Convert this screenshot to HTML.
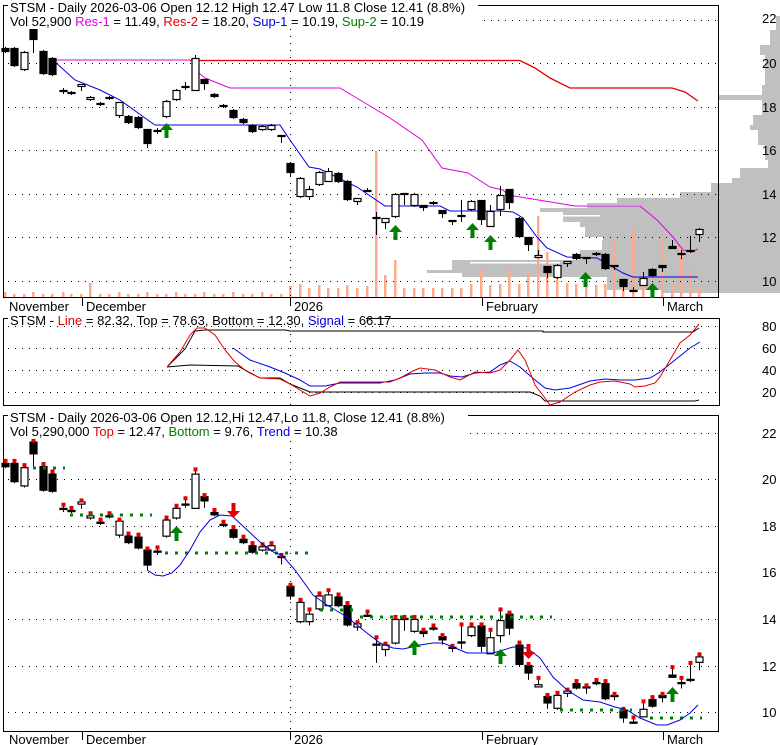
<!DOCTYPE html>
<html><head><meta charset="utf-8"><style>
body{margin:0;background:#fff;width:780px;height:745px;overflow:hidden}
svg{display:block}
text{font-family:"Liberation Sans",Arial,sans-serif;font-size:13px}
</style></head><body>
<svg id="s" width="780" height="745" xmlns="http://www.w3.org/2000/svg">
<g id="bg"></g>
<g id="g"></g>
<g id="t">
<rect x="8" y="0" width="470" height="29" fill="#fff"/>
<text x="10" y="12">STSM - Daily 2026-03-06 Open 12.12  High 12.47  Low 11.8  Close 12.41 (8.8%)</text>
<text x="10" y="26">Vol 52,900 <tspan fill="#e000e0">Res-1</tspan> = 11.49, <tspan fill="#e00000">Res-2</tspan> = 18.20, <tspan fill="#0000e0">Sup-1</tspan> = 10.19, <tspan fill="#008000">Sup-2</tspan> = 10.19</text>
<text x="9" y="311">November</text><text x="86" y="311">December</text><text x="294" y="311">2026</text><text x="486" y="311">February</text><text x="667" y="311">March</text>
<rect x="8" y="312" width="358" height="14" fill="#fff"/>
<text x="10" y="325">STSM - <tspan fill="#e00000">Line</tspan> = 82.32, Top = 78.63, Bottom = 12.30, <tspan fill="#0000e0">Signal</tspan> = 66.17</text>
<rect x="8" y="410" width="460" height="29" fill="#fff"/>
<text x="10" y="422">STSM - Daily 2026-03-06 Open 12.12,Hi 12.47,Lo 11.8, Close 12.41 (8.8%)</text>
<text x="10" y="436">Vol 5,290,000 <tspan fill="#e00000">Top</tspan> = 12.47, <tspan fill="#008000">Bottom</tspan> = 9.76, <tspan fill="#0000e0">Trend</tspan> = 10.38</text>
<text x="9" y="744">November</text><text x="86" y="744">December</text><text x="294" y="744">2026</text><text x="486" y="744">February</text><text x="667" y="744">March</text>
<g font-size="13">
<text x="762" y="23">22</text><text x="762" y="68">20</text><text x="762" y="112">18</text><text x="762" y="155">16</text><text x="762" y="199">14</text><text x="762" y="242">12</text><text x="762" y="286">10</text>
<text x="762" y="331">80</text><text x="762" y="353">60</text><text x="762" y="375">40</text><text x="762" y="397">20</text>
<text x="762" y="438">22</text><text x="762" y="484">20</text><text x="762" y="531">18</text><text x="762" y="577">16</text><text x="762" y="624">14</text><text x="762" y="671">12</text><text x="762" y="717">10</text>
</g>
</g>
</svg>
<script>
var NS="http://www.w3.org/2000/svg",G=document.getElementById('g'),BG=document.getElementById('bg');
function el(n,a,p){var e=document.createElementNS(NS,n);for(var k in a)e.setAttribute(k,a[k]);(p||G).appendChild(e);return e;}
function pl(pts,c,w,d){el('polyline',{points:pts.map(function(p){return p.join(',')}).join(' '),fill:'none',stroke:c,'stroke-width':w||1,'stroke-dasharray':d||''});}
function hd(y,x1,x2){el('line',{x1:x1||8,x2:x2||718,y1:y+.5,y2:y+.5,stroke:'#000','stroke-dasharray':'1,6'});}
var prof=[[16,776],[30,770],[45,760],[55,765],[85,762],[95,718],[100,762],[115,753],[125,750],[130,758],[145,765],[160,768],[168,740],[178,732],[183,711],[192,680],[198,617],[203,587],[208,540],[212,563],[222,580],[227,585],[237,603],[240,602],[250,580],[260,452],[264,452],[270,427],[273,462],[277,607],[290,663],[293,780]];
for(var i=0;i<prof.length-1;i++){el('rect',{x:prof[i][1],y:prof[i][0],width:780-prof[i][1],height:prof[i+1][0]-prof[i][0],fill:'#c0c0c0'},BG);}
[[205,560,640],[215,530,600],[250,440,560],[262,470,560]].forEach(function(a){el('rect',{x:a[1],y:a[0],width:a[2]-a[1],height:1.5,fill:'#fff'},BG);});
el('rect',{x:3.5,y:5.5,width:715,height:292,fill:'none',stroke:'#000'});
el('rect',{x:3.5,y:318.5,width:716,height:87,fill:'none',stroke:'#000'});
el('rect',{x:3.5,y:415.5,width:715,height:316,fill:'none',stroke:'#000'});
[20,63,107,150,194,237,281].forEach(function(y){hd(y)});
[326,348,370,392].forEach(function(y){hd(y)});
[433,479,526,572,619,666,712].forEach(function(y){hd(y)});
[[8,297],[320,405],[420,731]].forEach(function(r){el('line',{x1:290.5,x2:290.5,y1:r[0],y2:r[1],stroke:'#000','stroke-dasharray':'1,6'});});
[82,290,482,663].forEach(function(x){el('line',{x1:x+.5,x2:x+.5,y1:298,y2:306,stroke:'#000'});el('line',{x1:x+.5,x2:x+.5,y1:732,y2:740,stroke:'#000'});});
var C=[[5,48,52,1],[14,48,66,1],[24,52,70,0],[33,28,40,1,28,53],[43,51,74,1],[52,58,75,1],[63,90,92,1,88,94],[71,92,94,1],[81,84,87,0,84,91],[90,97,100,0],[100,103,105,1],[109,97,99,1],[119,102,116,0,102,118],[128,116,123,1],[138,117,128,1],[147,129,144,1,129,148],[157,130,132,1,128,134],[166,101,117,0],[176,90,100,0],[185,86,88,1,82,90],[195,58,91,0,55,91],[204,79,84,1,79,90],[214,94,97,1],[223,105,107,1],[233,110,118,1],[243,119,123,1],[252,125,132,1],[262,126,130,0],[271,125,130,0],[281,135,137,1,135,143],[290,163,173,1,163,176],[300,178,197,0],[309,189,197,0,186,200],[319,172,185,0],[328,171,182,0,168,182],[338,173,182,1],[347,181,200,1],[357,198,202,0,198,205],[367,190,192,1,188,192],[376,217,219,1,212,235],[385,218,223,0,218,229],[395,194,217,0],[404,193,195,1,193,205],[414,194,206,0],[423,205,208,1,205,211],[433,202,204,1],[442,210,214,1,210,218],[452,220,222,0,220,225],[461,215,217,1,200,222],[471,201,210,0],[481,200,220,1,200,225],[490,211,227,0,205,227],[500,195,210,0,186,216],[509,189,203,1,189,209],[519,218,237,1],[528,237,245,1,237,251],[538,255,258,0,250,258],[547,266,273,1,266,278],[557,265,278,0],[567,261,264,0,261,267],[576,254,259,1],[586,257,259,0,257,264],[596,253,255,1],[605,254,269,1],[614,265,267,1,265,270],[623,279,287,1,279,291],[633,290,292,0,287,292],[643,278,286,0,272,286],[652,269,276,1],[662,265,268,1,265,272],[672,246,249,1,240,249],[681,253,255,1,250,259],[690,250,252,1,236,253],[699,229,235,0,228,242]];
var V={9:283,30:286,31:284,33:285,36:285,38:286,39:151,40:275,41:260,49:284,50:270,51:285,52:284,53:270,54:284,55:273,56:216,57:252,58:275,59:283,60:284,61:284,62:285,63:284,64:238,65:284,66:229,67:284,68:285,69:238,70:284,71:246,72:270};
C.forEach(function(c,i){var vt=V[i]||(i<30?(i%3?294:292):288);el('rect',{x:c[0]-1,y:vt,width:2.5,height:297-vt,fill:'#ffa98a'},BG);});
function T(y){return 712-(281-y)*1.069;}
function cand(c,f,p3){var x=c[0],t=f(c[1]),b=f(c[2]),wt=f(c[4]!=null?c[4]:c[1]-1),wb=f(c[5]!=null?c[5]:c[2]+1);
 el('line',{x1:x+.5,x2:x+.5,y1:wt,y2:wb,stroke:'#000'});
 if(b-t<2){el('rect',{x:x-3.5,y:t-.5,width:8,height:2.5,fill:'#000'});}
 else el('rect',{x:x-3,y:t+.5,width:7,height:b-t-1,fill:c[3]?'#000':'#fff',stroke:'#000','stroke-width':1.2});
 if(p3)el('rect',{x:x-1.5,y:wt-3,width:4,height:4,fill:'#e00000'});}
pl([[55,60],[190,60]],'#e000e0');
pl([[190,60.5],[520,60.5],[535,68],[550,78],[570,88],[672,88],[685,92],[698,101]],'#e00000',1.3);
pl([[195,70],[205,78],[215,82],[230,88],[340,88],[360,100],[380,112],[390,118],[422,140],[442,168],[468,173],[490,187],[503,190],[508,195],[575,206],[640,206],[657,220],[673,237],[683,250],[692,252],[698,249]],'#e000e0');
pl([[55,62],[75,80],[100,90],[120,100],[145,118],[155,125],[280,125],[290,140],[309,167],[320,169],[357,187],[385,206],[440,206],[450,211],[500,211],[513,212],[523,218],[537,237],[547,248],[567,257],[597,258],[623,273],[633,277],[698,277]],'#0000e0');
C.forEach(function(c){cand(c,function(y){return y},false)});
C.forEach(function(c){cand(c,T,true)});
function up(x,y,c){el('polygon',{points:[x-6,y+7,x+.5,y,x+7,y+7,x+2.5,y+7,x+2.5,y+15,x-1.5,y+15,x-1.5,y+7].join(','),fill:c||'#008000'});}
function dn(x,y){el('polygon',{points:[x-6,y+8,x+.5,y+15,x+7,y+8,x+2.5,y+8,x+2.5,y,x-1.5,y,x-1.5,y+8].join(','),fill:'#e00000'});}
[[166,123],[395,225],[472,223],[490,235],[585,272],[652,283]].forEach(function(a){up(a[0],a[1])});
pl([[167,367],[185,349],[195,331],[205,330],[285,330],[290,331],[543,331],[543,332],[693,332],[699,328]],'#000');
pl([[167,367],[190,365],[238,366],[250,373],[260,378],[280,378],[290,384],[310,392],[530,392],[540,396],[545,401],[695,401],[699,400]],'#000');
pl([[233,348],[250,360],[270,367],[285,373],[300,380],[310,386],[325,386],[340,383],[380,383],[395,380],[410,374],[425,373],[440,373],[450,376],[462,377],[475,373],[490,372],[500,365],[510,361],[520,367],[535,380],[545,388],[555,390],[570,388],[590,381],[605,379],[620,380],[635,380],[650,378],[660,372],[675,360],[690,348],[700,342]],'#0000e0');
pl([[167,367],[180,352],[190,335],[197,328],[205,328],[215,335],[225,350],[235,362],[245,370],[260,378],[280,379],[290,384],[300,390],[310,396],[320,393],[330,387],[340,382],[390,382],[400,378],[413,371],[420,368],[435,370],[450,377],[460,380],[475,372],[490,373],[500,370],[510,360],[518,350],[525,360],[530,372],[535,385],[545,398],[550,405],[560,402],[575,392],[590,385],[600,382],[615,381],[630,384],[635,387],[645,386],[655,383],[660,377],[670,360],[680,343],[690,335],[699,324]],'#e00000');
function gd(y,x1,x2){el('line',{x1:x1,x2:x2,y1:y,y2:y,stroke:'#008000','stroke-width':3,'stroke-dasharray':'3,7'});}
gd(468,33,65);gd(515,70,152);gd(553,165,312);gd(610,320,357);gd(617,360,552);gd(710,560,632);gd(718,650,702);
pl([[147,570],[155,575],[163,576],[172,573],[180,565],[190,550],[200,532],[210,520],[220,515],[232,516],[245,528],[260,542],[275,553],[282,555],[295,570],[313,595],[327,605],[347,617],[367,633],[380,643],[393,648],[403,649],[412,647],[420,645],[433,643],[443,643],[453,647],[467,653],[480,653],[493,653],[500,651],[513,647],[527,648],[540,658],[553,677],[567,690],[583,700],[600,702],[615,707],[627,710],[640,718],[657,725],[667,725],[680,720],[690,713],[698,705]],'#0000e0');
up(176,526);up(414,640);up(500,649);up(672,687);dn(233,503);dn(528,644);
</script>
</body></html>
